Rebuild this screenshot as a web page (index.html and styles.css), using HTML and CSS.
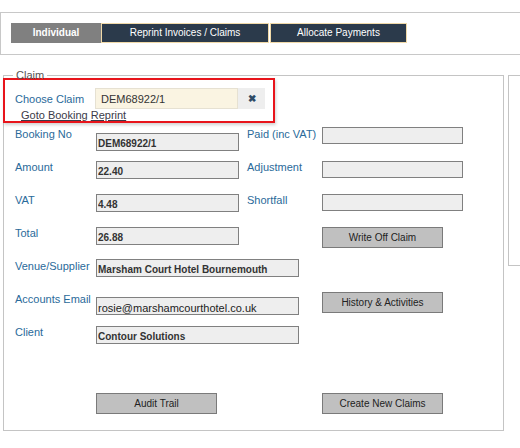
FILE: index.html
```html
<!DOCTYPE html>
<html lang="en">
<head>
  <meta charset="UTF-8">
  <meta name="viewport" content="width=device-width, initial-scale=1.0">
  <title>Claims</title>
  <link rel="stylesheet" href="styles.css">
</head>
<body>
  <div class="tabbar">
    <a href="#" class="tab active">Individual</a>
    <a href="#" class="tab">Reprint Invoices / Claims</a>
    <a href="#" class="tab tab--last">Allocate Payments</a>
  </div>

  <div class="main">
    <fieldset class="claim">
      <legend>Claim</legend>

      <div class="choose">
        <div class="choose__row">
          <label class="choose__label">Choose Claim</label>
          <input class="choose__input" type="text" value="DEM68922/1">
          <a href="#" class="choose__clear">&#10006;</a>
        </div>
        <div class="choose__links">
          <a href="#">Goto Booking</a> <a href="#">Reprint</a>
        </div>
      </div>

      <div class="form">
        <div class="row">
          <label class="lbl">Booking No</label>
          <div class="cell"><input class="fld fld--low" type="text" value="DEM68922/1" readonly></div>
          <label class="lbl lbl--2">Paid (inc VAT)</label>
          <div class="cell"><input class="fld fld--r fld--top" type="text" readonly></div>
        </div>
        <div class="row">
          <label class="lbl">Amount</label>
          <div class="cell"><input class="fld" type="text" value="22.40" readonly></div>
          <label class="lbl lbl--2">Adjustment</label>
          <div class="cell"><input class="fld fld--r" type="text" readonly></div>
        </div>
        <div class="row">
          <label class="lbl">VAT</label>
          <div class="cell"><input class="fld" type="text" value="4.48" readonly></div>
          <label class="lbl lbl--2">Shortfall</label>
          <div class="cell"><input class="fld fld--r" type="text" readonly></div>
        </div>
        <div class="row">
          <label class="lbl">Total</label>
          <div class="cell"><input class="fld" type="text" value="26.88" readonly></div>
          <span class="lbl lbl--2"></span>
          <div class="cell"><button class="btn">Write Off Claim</button></div>
        </div>
        <div class="row">
          <label class="lbl">Venue/Supplier</label>
          <div class="cell cell--wide"><input class="fld fld--wide fld--top" type="text" value="Marsham Court Hotel Bournemouth" readonly></div>
        </div>
        <div class="row">
          <label class="lbl">Accounts Email</label>
          <div class="cell cell--wide"><input class="fld fld--wide fld--email" type="text" value="rosie@marshamcourthotel.co.uk" readonly></div>
          <div class="cell"><button class="btn btn--top">History &amp; Activities</button></div>
        </div>
        <div class="row">
          <label class="lbl">Client</label>
          <div class="cell cell--wide"><input class="fld fld--wide" type="text" value="Contour Solutions" readonly></div>
        </div>
      </div>

      <div class="actions">
        <button class="btn">Audit Trail</button>
        <button class="btn">Create New Claims</button>
      </div>
    </fieldset>

    <div class="side"></div>
  </div>
</body>
</html>
```

FILE: styles.css
```css
/* reset */
* {
  box-sizing: border-box;
}
body {
  margin: 0;
  font-family: "Liberation Sans", Arial, sans-serif;
  font-size: 11px;
  background-color: #fff;
  overflow: hidden;
}
a {
  text-decoration: none;
}

/* tabs */
.tabbar {
  margin-top: 12px;
  height: 43px;
  border: 1px solid #c8c8c8;
  border-right: 0;
  padding: 10px 0 0 10px;
  display: flex;
}
.tab {
  height: 20px;
  line-height: 18px;
  width: 168px;
  text-align: center;
  font-size: 10px;
  color: #fff;
  background-color: #2b3a4b;
  border: 1px solid #f0d9a8;
}
.tab.active {
  width: 90px;
  background-color: #808080;
  border-color: #808080;
  font-weight: bold;
}
.tab--last {
  width: 137px;
  margin-left: 1px;
}

/* layout */
.main {
  display: flex;
  align-items: flex-start;
  margin-top: 13px;
}
.claim {
  width: 501px;
  height: 363px;
  margin: 0 0 0 3px;
  padding: 0 10px 0 11px;
  border: 1px solid #c4c4c4;
  flex: none;
}
.claim legend {
  padding: 0 3px;
  margin-left: -2px;
  font-size: 11px;
  line-height: 14px;
  color: #555;
}
.side {
  flex: none;
  width: 60px;
  height: 191px;
  margin-left: 4px;
  margin-top: 7px;
  border: 1px solid #c4c4c4;
}

/* choose claim (highlighted) */
.choose {
  width: 272px;
  height: 45px;
  margin: -4px 0 0 -12px;
  padding: 8px 0 0 10px;
  border: 2px solid #e8141b;
  box-shadow: 1px 2px 3px rgba(0, 0, 0, 0.18);
}
.choose__row {
  display: flex;
  align-items: center;
  height: 21px;
}
.choose__label {
  width: 80px;
  color: #2a6a9a;
}
.choose__input {
  width: 143px;
  height: 21px;
  padding: 0 0 0 5px;
  border: 1px solid #e6e1d2;
  background-color: #faf4e2;
  font: 11px "Liberation Sans", Arial, sans-serif;
  color: #333;
}
.choose__clear {
  width: 27px;
  height: 21px;
  line-height: 21px;
  text-align: center;
  background-color: #eee;
  color: #2d4a66;
  font-size: 10px;
  font-weight: bold;
}
.choose__links {
  margin-left: 6px;
  line-height: 13px;
}
.choose__links a {
  color: #3a3a48;
  text-decoration: underline;
}

/* form */
.form {
  margin-top: 4px;
}
.row {
  display: flex;
  align-items: flex-start;
  height: 33px;
}
.lbl {
  width: 81px;
  flex: none;
  color: #2a6a9a;
  line-height: 14px;
  white-space: nowrap;
}
.lbl--2 {
  width: 75px;
}
.cell {
  width: 151px;
  flex: none;
}
.cell--wide {
  width: 226px;
}
.fld {
  display: block;
  width: 143px;
  height: 18px;
  margin-top: 1px;
  padding: 3px 0 0 1px;
  border: 1px solid #808080;
  background-color: #eee;
  font: bold 10px "Liberation Sans", Arial, sans-serif;
  color: #333;
}
.fld--low {
  margin-top: 6px;
}
.fld--r {
  width: 141px;
  height: 17px;
}
.fld--wide {
  width: 203px;
}
.fld--top {
  margin-top: 0;
}
.fld--email {
  margin-top: 5px;
  font-weight: normal;
  font-size: 11px;
  color: #222;
}
.btn {
  display: block;
  width: 121px;
  height: 21px;
  margin-top: 1px;
  border: 1px solid #7a7a7a;
  background-color: #c0c0c0;
  font: 10px "Liberation Sans", Arial, sans-serif;
  color: #222;
  padding: 0;
}
.btn--top {
  margin-top: 0;
}
.actions {
  display: flex;
  gap: 105px;
  margin: 34px 0 0 81px;
}
```
